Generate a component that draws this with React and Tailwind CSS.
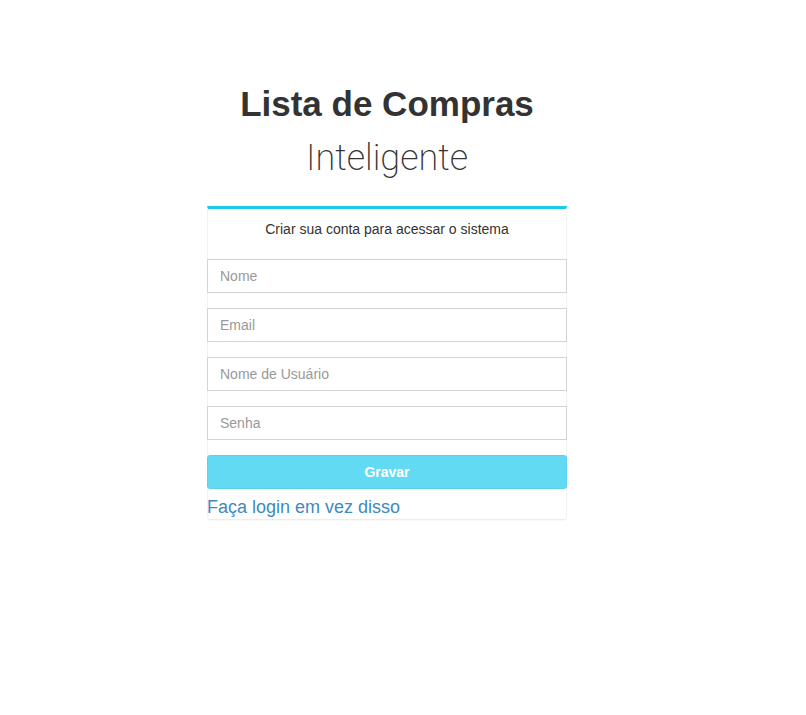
export default function App() {
  const fields = ["Nome", "Email", "Nome de Usuário", "Senha"];
  return (
    <div className="min-h-[715px] w-full bg-white font-['Liberation_Sans',Arial,sans-serif] text-[#333]">
      <div className="ml-[207px] w-[360px] pt-[84px]">
        <h1 className="text-center text-[35px] font-bold leading-[40px] text-[#333]">Lista de Compras</h1>
        <h2 className="mt-[14px] text-center font-['Roboto',sans-serif] text-[36px] font-extralight leading-[40px] text-[#333]">Inteligente</h2>
        <div className="mt-[28px] rounded-b-[4px] border-t-[3px] border-t-[#1ec8e9] border-x border-b border-x-[#f2f2f2] border-b-[#ececec] shadow-[0_1px_1px_rgba(0,0,0,0.03)]">
          <div className="h-[50px] pt-[12px] text-center text-[14px] leading-[16px] text-[#333]">
            Criar sua conta para acessar o sistema
          </div>
          <div className="-mx-px flex flex-col gap-[15px]">
            {fields.map((f) => (
              <input
                key={f}
                type={f === "Senha" ? "password" : "text"}
                placeholder={f}
                className="h-[34px] w-full border border-[#cfd3da] bg-white px-[12px] text-[14px] text-[#555] outline-none placeholder:text-[#999]"
              />
            ))}
            <button className="h-[34px] w-full rounded-[3px] border border-[#5bd3ee] bg-[#62daf4] text-[14px] font-bold text-white">
              Gravar
            </button>
          </div>
          <div className="-mx-px pt-[7px]">
            <a href="#" className="block text-[18px] leading-[23px] text-[#3d8ac0]">Faça login em vez disso</a>
          </div>
        </div>
      </div>
    </div>
  );
}
